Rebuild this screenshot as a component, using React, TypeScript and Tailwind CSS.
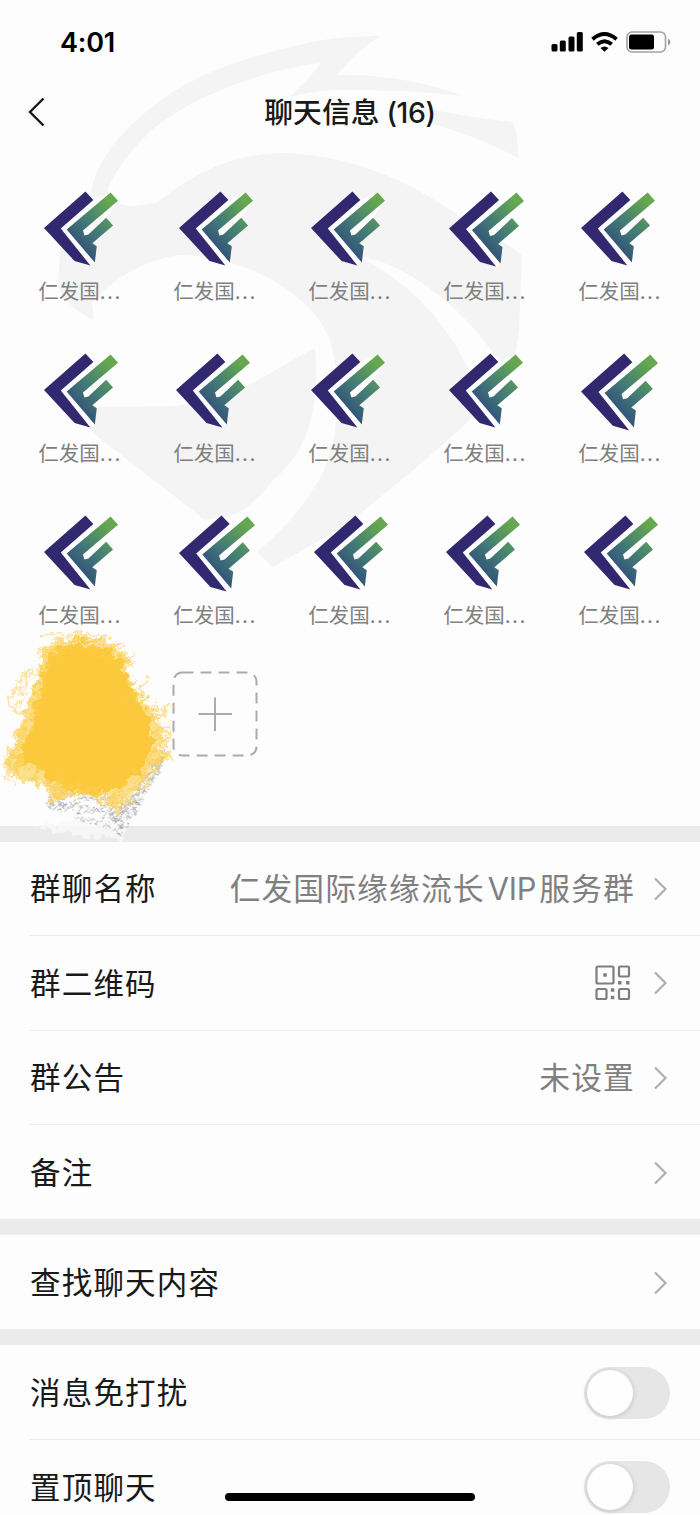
import React from "react";

const cjk = "font-['Inter','Noto_Sans_CJK_SC',sans-serif]";

function Watermark() {
  return (
    <svg className="pointer-events-none absolute left-0 top-0" width="700" height="600" viewBox="0 0 700 600">
      <g fill="#f4f4f4">
        <path d="M92 191C94 165 118 135 147 111C195 70 255 55 312 42Q345 35 380 36Q360 48 337 75Q405 74 464 96Q400 89 339 90Q310 91 290 97Q306 82 321 63C260 70 190 98 152 130Q120 160 107 190Z" />
        <path d="M420 107Q470 118 512 122Q518 130 518 158Q480 137 433 124Z" />
        <path d="M92 189L107 189Q112 206 134 206L156 203C186 180 225 153 286 153C360 157 415 183 473 226Q505 240 522 256L519 330L512 375L493 353C460 305 405 262 357 256C400 277 430 305 457 347L484 400L470 420Q410 475 343 527L273 567L257 552Q275 537 293 517Q314 490 323 473Q335 440 335 430Q342 385 330 340C310 290 240 255 179 255Q130 262 92 302L94 320Q68 308 58 287L60 249Q85 225 92 189Z" />
        <path d="M97 407L177 406Q215 400 253 383L307 352L315 348Q320 395 308 430Q298 460 273 480Q255 505 233 515L205 520L89 430Z" />
      </g>
    </svg>
  );
}

function Logo({ x, w }: { x: number; w: number }) {
  return (
    <svg className="block shrink-0" style={{ marginLeft: x, width: w, height: w + 1 }} viewBox="0 0 75 76">
      <defs>
        <linearGradient id="leaf" x1="26" y1="50" x2="66" y2="10" gradientUnits="userSpaceOnUse">
          <stop offset="0" stopColor="#32517a" />
          <stop offset=".45" stopColor="#437b76" />
          <stop offset="1" stopColor="#66a850" />
        </linearGradient>
      </defs>
      <path d="M17 38L50 9L68 1.500L24 39L51 72L47 75Z" fill="#fdfdfd" />
      <path d="M75 10L40 40L41 45L45 44L63 27Z" fill="#fdfdfd" />
      <path d="M0 37.500L42 0.500L50 9L17 38L47 75.500L31 71Z" fill="#32286f" />
      <path d="M23 39L67.500 1.500L75 10L39.500 40L41 45L45 44L63 27L70 35L49 53L53.500 56L51.500 72.500Z" fill="url(#leaf)" />
    </svg>
  );
}

const rows: [number, number][][] = [
  [[44, 74], [179, 74], [311, 74], [449, 75], [581, 74]],
  [[44, 74], [176, 74], [311, 74], [449, 74], [581, 77]],
  [[44, 74], [179, 76], [314, 74], [446, 74], [584, 74]],
];

function Chevron() {
  return (
    <svg width="14" height="24" viewBox="0 0 14 24" className="shrink-0" fill="none" stroke="#b0b0b0" strokeWidth="2.2">
      <path d="M1 1.500L11.500 12L1 22.500" />
    </svg>
  );
}

function QrIcon() {
  return (
    <svg width="36" height="36" viewBox="0 0 36 36" fill="none" stroke="#7e7e7e" strokeWidth="2.200">
      <rect x="1.500" y="1.500" width="17" height="17" rx="1.5" />
      <rect x="24" y="1.500" width="10" height="10" rx="1.5" />
      <rect x="1.500" y="24" width="10" height="10" rx="1.5" />
      <rect x="24" y="24" width="10" height="10" rx="1.5" />
      <path d="M8.300 10h3.500M23 17.800h3.500M31 17.800h3.500M15.800 25h3.500M15.800 32.500h3.500" strokeWidth="3.500" />
    </svg>
  );
}

function Row({ label, last, children }: { label: string; last?: boolean; children: React.ReactNode }) {
  return (
    <div className="bg-[#fdfdfd] pl-[30px]">
      <div className={`flex h-[94.300px] items-center justify-between pr-[32px] pt-px ${last ? "" : "border-b border-[#ebebeb]"}`}>
        <span className="text-[30.500px] tracking-[1.200px] text-[#191919]">{label}</span>
        <div className="flex items-center gap-[19px] text-[30.800px] tracking-[1.100px] text-[#808080]">{children}</div>
      </div>
    </div>
  );
}

function Toggle() {
  return (
    <div className="-mr-[2px] h-[52px] w-[86px] rounded-full bg-[#e6e6e6] p-[3px]">
      <div className="h-[46px] w-[46px] rounded-full bg-[#fefefe] shadow-[0_1px_4px_1px_rgba(0,0,0,0.12)]" />
    </div>
  );
}

function seeded(seed: number) {
  let s = seed;
  return () => {
    s = (s * 16807) % 2147483647;
    return s / 2147483647;
  };
}

const outline: [number, number][] = [
  [42, 20], [82, 8], [126, 28], [131, 64], [152, 82], [163, 106], [160, 136], [140, 160], [116, 182],
  [92, 168], [54, 170], [40, 156], [10, 146], [6, 134], [24, 92], [34, 58],
];

const rand = seeded(421);
const bristles = Array.from({ length: 520 }, () => {
  const k = Math.floor(rand() * outline.length);
  const [ax, ay] = outline[k];
  const [bx, by] = outline[(k + 1) % outline.length];
  const t = rand();
  const pull = -0.04 + rand() * 0.2;
  const px = ax + (bx - ax) * t;
  const py = ay + (by - ay) * t;
  const x = px + (84 - px) * pull;
  const y = py + (92 - py) * pull;
  const l = 2 + rand() * 8;
  return { d: `M${x.toFixed(1)} ${y.toFixed(1)}l${l.toFixed(1)} ${(-l * 0.7).toFixed(1)}`, o: 0.25 + rand() * 0.5, w: 0.8 + rand() * 1.6 };
});

const specks = Array.from({ length: 560 }, () => {
  const t = rand();
  const right = t > 0.6;
  const u = right ? (t - 0.6) / 0.4 : t / 0.6;
  const x = (right ? 118 + u * 44 : 46 + u * 76) + (rand() - 0.5) * 5;
  const y = right ? 212 - u * 76 - rand() * 30 * (1 - u * 0.6) : 180 + u * 26 - rand() * 34;
  const l = 0.8 + rand() * 2.4;
  return { d: `M${x.toFixed(1)} ${y.toFixed(1)}l${l.toFixed(1)} ${(-l * (rand() * 2.4 - 1)).toFixed(1)}`, o: 0.15 + rand() * 0.4 };
});

function Scribble() {
  return (
    <svg className="pointer-events-none absolute left-0 top-[628px]" width="180" height="216" viewBox="0 0 180 216">
      <defs>
        <filter id="crayon" x="-10%" y="-10%" width="120%" height="120%">
          <feTurbulence type="fractalNoise" baseFrequency="0.11" numOctaves="4" seed="8" result="n" />
          <feDisplacementMap in="SourceGraphic" in2="n" scale="16" xChannelSelector="R" yChannelSelector="G" />
        </filter>
      </defs>
      <path d="M36 197L92 194L128 190L120 212L84 208L40 202Z" fill="#f9f9f9" opacity=".8" filter="url(#crayon)" />
      <g stroke="#9c9ca4" strokeWidth="1.300" strokeLinecap="round">
        {specks.map((s, i) => <path key={i} d={s.d} opacity={s.o} />)}
      </g>
      <g filter="url(#crayon)">
        <path d="M4 140L16 112L25 84L34 60L45 18L60 14L82 8L104 14L126 28L130 60L148 78L162 102L157 132L140 158L122 172L116 188L106 170L88 166L54 172L44 158L12 148Z" fill="#fbd567" opacity=".75" />
        <path d="M25 112L34 86L40 48L52 24L82 10L122 30L130 62L150 88L152 120L140 146L112 164L70 164L46 146L24 134Z" fill="#fbc93a" />
        <g stroke="#fbcf50" fill="none">
          {bristles.map((b, i) => <path key={i} d={b.d} opacity={b.o} strokeWidth={b.w} />)}
        </g>
        <path d="M40 6L100 5M48 12L126 20M16 55L30 42M5 70L24 91M8 72L32 46M14 82L34 42M3 132L23 94M142 62L150 48M156 88L172 76M160 104L172 134L164 120M4 138L12 156M10 120L14 152" stroke="#fce09a" strokeWidth="1.800" fill="none" />
      </g>
    </svg>
  );
}

export default function App() {
  return (
    <main className={`relative h-[1515px] w-[700px] overflow-hidden bg-[#fdfdfd] ${cjk}`}>
      <Watermark />
      <div className="relative flex h-[826px] flex-col">
        <header className="flex h-[84px] items-center justify-between pl-[60px] pr-[29px]">
          <time className="pt-[2px] text-[27px] font-semibold tracking-[-0.200px] text-black">4:01</time>
          <div className="flex items-center gap-[8px]">
            <svg width="32" height="20" viewBox="0 0 32 20">
              <rect x="0.500" y="12" width="6" height="7.500" rx="1.500" />
              <rect x="8.800" y="8.500" width="6" height="11" rx="1.500" />
              <rect x="17.500" y="4.500" width="6" height="15" rx="1.500" />
              <rect x="25.800" y="0" width="6" height="19.500" rx="1.500" />
            </svg>
            <svg width="27" height="20" viewBox="0 0 27 20" fill="none" stroke="#000" strokeWidth="3.800">
              <path d="M1.500 7.200Q13.500 -3.200 25.500 7.200M6.300 12.300Q13.500 6.200 20.700 12.300" />
              <path d="M9.500 16Q13.500 12.900 17.500 16L13.500 19.800Z" fill="#000" stroke="none" />
            </svg>
            <svg width="45" height="22" viewBox="0 0 45 22">
              <rect x="1" y="1" width="38.500" height="20" rx="5" fill="none" stroke="#a2a2a2" strokeWidth="1.600" />
              <rect x="3" y="3.500" width="25" height="15" rx="2.500" />
              <path d="M42 7.500Q44.500 9 44.500 11Q44.500 13 42 14.500Z" fill="#999" />
            </svg>
          </div>
        </header>
        <nav className="grid h-[56px] grid-cols-[100px_1fr_100px] items-center">
          <svg className="ml-[28px]" width="17" height="30" viewBox="0 0 17 30" fill="none" stroke="#191919" strokeWidth="2.400">
            <path d="M15.500 1.500L2 15L15.500 28.500" />
          </svg>
          <h1 className="whitespace-pre pt-[3px] text-center text-[28.800px] font-medium leading-none text-[#191919]">
            聊天信息<span className="ml-[7px] text-[28.500px] tracking-[-0.400px]">(16)</span>
          </h1>
        </nav>
        <section className="mt-[51px]">
          {rows.map((row, i) => (
            <div key={i} className="grid h-[162px] grid-cols-[135px_135px_135px_135px_135px] pl-[12px]">
              {row.map(([x, w], j) => (
                <div key={j} className="flex flex-col">
                  <div className="h-[85px]"><Logo x={x - 12 - j * 135} w={w} /></div>
                  <span className="w-[135px] pl-px text-center text-[20.500px] leading-[32px] text-[#808080]">仁发国<span className="tracking-[1.500px]">...</span></span>
                </div>
              ))}
            </div>
          ))}
          <svg className="ml-[172px] -mt-[6px] block" width="86" height="86" viewBox="0 0 86 86" fill="none" stroke="#ababab" strokeWidth="2">
            <rect x="1.500" y="1.500" width="83" height="83" rx="9" strokeDasharray="11 7" />
            <path d="M26.500 43H60M43 26.500V60" />
          </svg>
        </section>
      </div>
      <div className="h-[16px] bg-[#ebebeb]" />
      <Row label="群聊名称"><span>仁发国际缘缘流长<span className="mx-[3px] tracking-[-0.200px]">VIP</span>服务群</span><Chevron /></Row>
      <Row label="群二维码"><span className="pr-[4px]"><QrIcon /></span><Chevron /></Row>
      <Row label="群公告"><span>未设置</span><Chevron /></Row>
      <Row label="备注" last><Chevron /></Row>
      <div className="h-[16px] bg-[#ebebeb]" />
      <Row label="查找聊天内容" last><Chevron /></Row>
      <div className="h-[16px] bg-[#ebebeb]" />
      <Row label="消息免打扰"><Toggle /></Row>
      <Row label="置顶聊天" last><Toggle /></Row>
      <Scribble />
      <div className="absolute left-[225px] top-[1493px] h-[8px] w-[250px] rounded-full bg-black" />
    </main>
  );
}
